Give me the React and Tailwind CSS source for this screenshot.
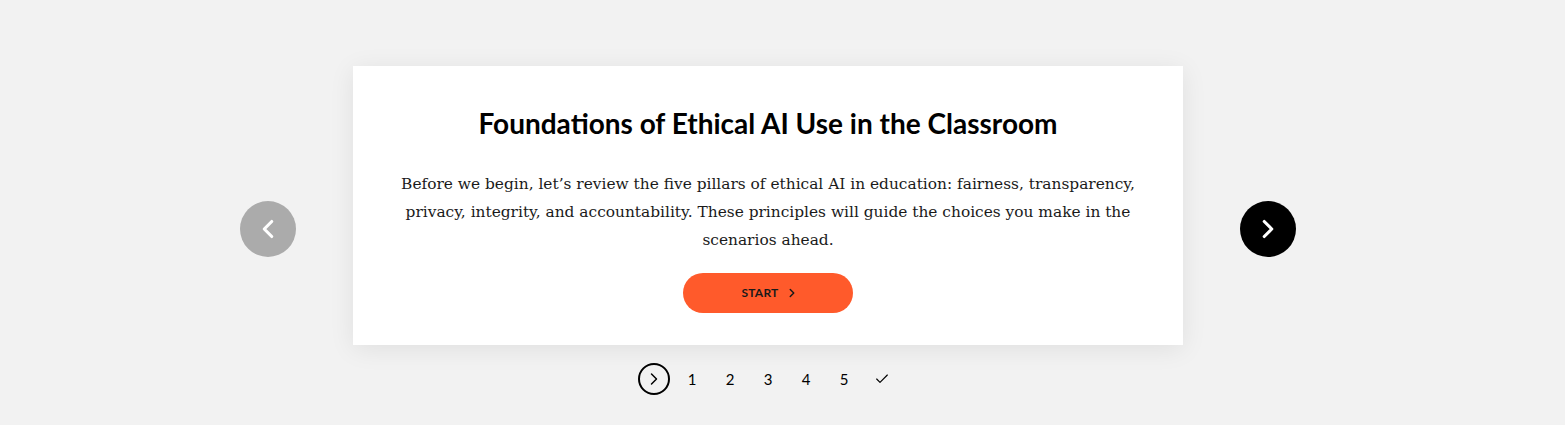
import React from 'react';
import { ChevronLeft, ChevronRight, Check } from 'lucide-react';

export default function App() {
  const steps = ['1', '2', '3', '4', '5'];

  return (
    <div className="min-h-[425px] w-full bg-[#f2f2f2]" style={{ fontFamily: 'Lato, sans-serif' }}>
      <div className="w-[1536px] flex flex-col items-center pt-[66px]">
        <div className="flex items-start gap-[57px]">
          <button className="mt-[135px] w-14 h-14 rounded-full bg-[#ababab] flex items-center justify-center text-white">
            <ChevronLeft size={30} strokeWidth={2.5} />
          </button>

          <div className="w-[830px] h-[279px] bg-white shadow-[0_4px_24px_rgba(0,0,0,0.08)] flex flex-col items-center pt-[40px]">
            <h1 className="text-[28px] leading-[34px] font-bold text-black">Foundations of Ethical AI Use in the Classroom</h1>
            <p className="mt-[30px] px-[40px] text-center text-[15.4px] leading-[28px] text-[#1a1a1a]" style={{ fontFamily: '"DejaVu Serif", serif' }}>
              Before we begin, let’s review the five pillars of ethical AI in education: fairness, transparency, privacy, integrity, and accountability. These principles will guide the choices you make in the scenarios ahead.
            </p>
            <button className="mt-[19px] w-[170px] h-10 rounded-full bg-[#ff5a2b] flex items-center justify-center gap-[6px] pl-[4px] text-[12px] font-bold tracking-[0.02em] text-[#1a1a1a]">
              START
              <ChevronRight size={14} strokeWidth={2.5} />
            </button>
          </div>

          <button className="mt-[135px] w-14 h-14 rounded-full bg-black flex items-center justify-center text-white">
            <ChevronRight size={30} strokeWidth={2.5} />
          </button>
        </div>

        <div className="mt-[18px] pr-2 flex items-center gap-[22px] text-[15px] text-black">
          <span className="w-8 h-8 -mr-2 rounded-full border-2 border-black flex items-center justify-center">
            <ChevronRight size={20} strokeWidth={1.75} />
          </span>
          {steps.map((s) => (
            <span key={s} className="w-4 text-center">{s}</span>
          ))}
          <Check size={16} strokeWidth={1.75} />
        </div>
      </div>
    </div>
  );
}
